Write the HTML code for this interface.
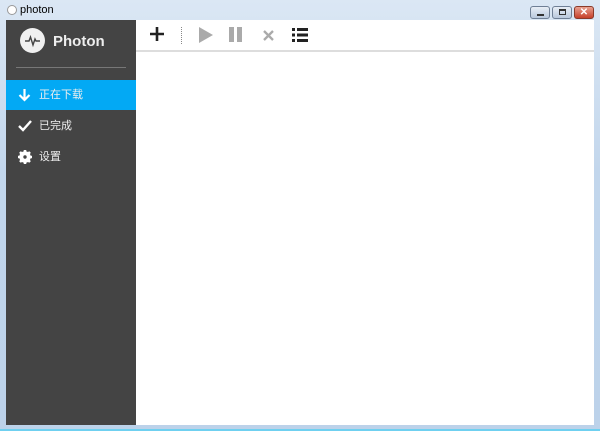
<!DOCTYPE html>
<html><head><meta charset="utf-8"><style>
*{margin:0;padding:0;box-sizing:border-box}
body{width:600px;height:431px;overflow:hidden;background:linear-gradient(#dbe7f4,#c2d6ec 40%,#bcd2ea);position:relative;font-family:"Liberation Sans","Noto Sans CJK SC",sans-serif}
.title{position:absolute;left:20px;top:4px;font-size:11px;color:#000}
.ticon{position:absolute;left:7px;top:5px;width:10px;height:10px;border-radius:50%;background:#fff;border:1px solid #999}
.btn{position:absolute;top:6px;height:13px;border:1px solid #6f7f95;border-radius:3px;background:linear-gradient(#e8eef6,#b9c8dc)}
.side{position:absolute;left:6px;top:20px;width:130px;height:405px;background:#444}
.main{position:absolute;left:136px;top:20px;width:458px;height:405px;background:#fff}
.tb{height:32px;border-bottom:2px solid #ddd;position:relative}
.logo{position:absolute;left:14px;top:8px;width:25px;height:25px;border-radius:50%;background:#f0f0f0}
.brand{position:absolute;left:47px;top:13px;color:#eee;font-weight:bold;font-size:15px}
.hr{position:absolute;left:10px;top:47px;width:110px;height:1px;background:#777}
.item{position:absolute;left:0;width:130px;height:30px;color:#eee;font-size:11px;line-height:30px;padding-left:33px}
.item svg{position:absolute;left:12px;top:8px}
.bottom{position:absolute;left:0;top:425px;width:600px;height:6px;background:#bcd2ea;border-bottom:2px solid #6fd0f0}
</style></head><body>
<div class="ticon"></div><div class="title">photon</div>
<div class="btn" style="left:530px;width:20px"><div style="position:absolute;left:6px;top:7px;width:7px;height:2px;background:#333"></div></div>
<div class="btn" style="left:552px;width:20px"><div style="position:absolute;left:6px;top:2px;width:7px;height:6px;border:1px solid #333;border-top-width:2px"></div></div>
<div class="btn" style="left:574px;width:20px;background:linear-gradient(#e8a090,#c6402a);border-color:#8a3a2a;color:#fff;font-size:10px;text-align:center;line-height:11px;font-weight:bold">✕</div>
<div class="side">
 <div class="logo"><svg width="25" height="25" viewBox="0 0 25 25"><path d="M5 13h4l1.5-4 2.5 8 2-6 1 2h4" fill="none" stroke="#444" stroke-width="1.4"/></svg></div>
 <div class="brand">Photon</div>
 <div class="hr"></div>
 <div class="item" style="top:60px;background:#03a9f4">正在下载<svg width="13" height="14"><path d="M6.5 1v11M1.5 7l5 5 5-5" fill="none" stroke="#fff" stroke-width="2.2"/></svg></div>
 <div class="item" style="top:91px">已完成<svg width="14" height="14"><path d="M1 7l4 4 8-9" fill="none" stroke="#fff" stroke-width="2.4"/></svg></div>
 <div class="item" style="top:122px">设置<svg width="14" height="14" viewBox="0 0 14 14"><circle cx="7" cy="7" r="4.5" fill="none" stroke="#fff" stroke-width="2.5"/><g stroke="#fff" stroke-width="2.6"><path d="M7 0v14M0 7h14M2 2l10 10M12 2L2 12"/></g><circle cx="7" cy="7" r="3.5" fill="#fff"/><circle cx="7" cy="7" r="1.7" fill="#444"/></svg></div>
</div>
<div class="main"><div class="tb">
 <svg style="position:absolute;left:14px;top:7px" width="14" height="14"><path d="M7 0v14M0 7h14" stroke="#222" stroke-width="2.6"/></svg>
 <div style="position:absolute;left:45px;top:7px;height:17px;border-left:1px dotted #888"></div>
 <svg style="position:absolute;left:63px;top:7px" width="14" height="16"><path d="M0 0L14 8 0 16z" fill="#aaa"/></svg>
 <svg style="position:absolute;left:93px;top:7px" width="14" height="16"><rect x="0" y="0" width="5" height="15" fill="#aaa"/><rect x="8" y="0" width="5" height="15" fill="#aaa"/></svg>
 <svg style="position:absolute;left:127px;top:10px" width="11" height="11"><path d="M1 1l9 9M10 1l-9 9" stroke="#aaa" stroke-width="2.3"/></svg>
 <svg style="position:absolute;left:156px;top:8px" width="16" height="14"><g fill="#222"><rect x="0" y="0" width="3" height="3"/><rect x="0" y="5.5" width="3" height="3"/><rect x="0" y="11" width="3" height="3"/><rect x="5" y="0" width="11" height="3"/><rect x="5" y="5.5" width="11" height="3"/><rect x="5" y="11" width="11" height="3"/></g></svg>
</div></div>
<div class="bottom"></div>
</body></html>
